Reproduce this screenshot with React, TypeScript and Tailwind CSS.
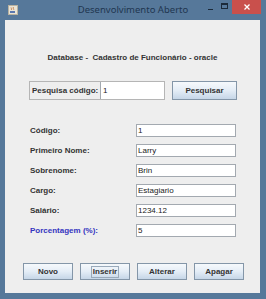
import React from 'react';

const labelFont = { fontFamily: '"Liberation Sans", Arial, sans-serif' };

function JavaIcon() {
  return (
    <svg width="10" height="10" viewBox="0 0 10 10">
      <rect x="0.5" y="0.5" width="9" height="9" fill="#e9e4d6" stroke="#b9b2a0" />
      <path d="M3 2.5 C4 3.5 2.5 4 4 5" stroke="#c06a2a" strokeWidth="0.8" fill="none" />
      <path d="M5 2 C6 3 4.5 3.8 6 4.8" stroke="#c06a2a" strokeWidth="0.8" fill="none" />
      <path d="M2 6 H7 V8 H2 Z" fill="#5a78b0" />
    </svg>
  );
}

function Field({ label, value, blue }: { label: string; value: string; blue?: boolean }) {
  return (
    <div className="flex items-center h-[13px]">
      <span
        className={`w-[131px] pl-[25px] text-[8px] font-bold leading-none ${blue ? 'text-[#3434bf]' : 'text-[#333]'}`}
      >
        {label}
      </span>
      <div className="w-[100px] h-[13px] bg-white border border-[#a3a9b0] flex items-center pl-[1px] text-[8px] text-[#222] leading-none">
        {value}
      </div>
    </div>
  );
}

function MetalButton({ children, w = 50, focus }: { children: React.ReactNode; w?: number; focus?: boolean }) {
  return (
    <div
      className="h-[17px] border border-[#8496a8] bg-linear-to-b from-[#f6f9fc] via-[#e4edf6] to-[#c6d6e7] flex items-center justify-center text-[8px] font-bold text-[#333] leading-none"
      style={{ width: w }}
    >
      {focus ? <span className="border border-[#9aaabb] px-[1px] py-[1px]">{children}</span> : children}
    </div>
  );
}

export default function App() {
  const fields = [
    { label: 'Código:', value: '1' },
    { label: 'Primeiro Nome:', value: 'Larry' },
    { label: 'Sobrenome:', value: 'Brin' },
    { label: 'Cargo:', value: 'Estagiario' },
    { label: 'Salário:', value: '1234.12' },
    { label: 'Porcentagem (%):', value: '5', blue: true },
  ];

  return (
    <div className="w-[266px] h-[299px] bg-[#56789a] flex flex-col" style={labelFont}>
      {/* title bar */}
      <div className="h-[20px] grid grid-cols-[1fr_auto_1fr]">
        <div className="pl-[8px] pt-[5px]">
          <JavaIcon />
        </div>
        <div
          className="pt-[3px] text-[9.5px] text-[#1f3650] leading-[14px]"
          style={{ fontFamily: '"Noto Sans", "Open Sans", sans-serif' }}
        >
          Desenvolvimento Aberto
        </div>
        <div className="flex justify-end items-start pr-[5px]">
          <div className="w-[14px] h-[14px] flex items-center justify-center">
            <div className="w-[5px] h-[1px] bg-[#1b2a3a] mt-[4px]" />
          </div>
          <div className="w-[14px] h-[14px] flex items-center justify-center">
            <div className="w-[7px] h-[6px] border border-[#1b2a3a] border-t-2 -mt-[2px]" />
          </div>
          <div className="w-[29px] h-[14px] ml-[1px] bg-[#c9504c] flex items-center justify-center">
            <svg width="6" height="6" viewBox="0 0 6 6">
              <path d="M0.5 0.5 L5.5 5.5 M5.5 0.5 L0.5 5.5" stroke="#fff" strokeWidth="1.3" />
            </svg>
          </div>
        </div>
      </div>

      {/* content */}
      <div className="ml-[5px] mr-[6px] mb-[6px] flex-1 bg-[#eeeeee] flex flex-col">
        <div className="pt-[32px] text-center text-[8px] font-bold text-[#333] leading-[11px] whitespace-pre">
          Database -  Cadastro de Funcionário - oracle
        </div>

        <div className="mt-[18px] flex items-center pl-[24px]">
          <div className="w-[136px] h-[19px] border border-[#b5b5b5] flex items-stretch">
            <span className="flex-1 flex items-center pl-[2px] text-[8px] font-bold text-[#333] leading-none">
              Pesquisa código:
            </span>
            <div className="w-[64px] bg-white border-l border-[#a3a9b0] flex items-center pl-[2px] text-[8px] text-[#222] leading-none">
              1
            </div>
          </div>
          <div className="ml-[7px]">
            <div className="h-[19px] w-[65px] border border-[#8496a8] bg-linear-to-b from-[#f6f9fc] via-[#e4edf6] to-[#c6d6e7] flex items-center justify-center text-[8px] font-bold text-[#333] leading-none">
              Pesquisar
            </div>
          </div>
        </div>

        <div className="mt-[24px] flex flex-col gap-[7px]">
          {fields.map((f) => (
            <Field key={f.label} label={f.label} value={f.value} blue={f.blue} />
          ))}
        </div>

        <div className="mt-[26px] pl-[18px] flex gap-[7px]">
          <MetalButton>Novo</MetalButton>
          <MetalButton focus>Inserir</MetalButton>
          <MetalButton>Alterar</MetalButton>
          <MetalButton>Apagar</MetalButton>
        </div>
      </div>
    </div>
  );
}
